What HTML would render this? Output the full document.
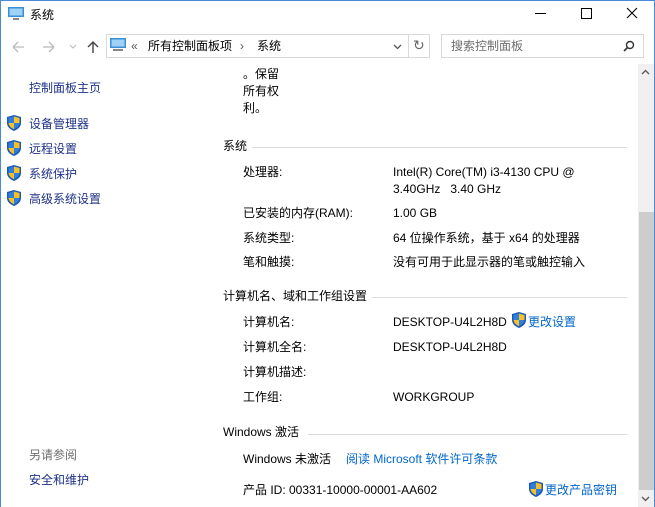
<!DOCTYPE html>
<html><head><meta charset="utf-8"><style>
*{margin:0;padding:0;box-sizing:border-box}
body{width:655px;height:507px;overflow:hidden;background:#fff;font-family:"Liberation Sans","Noto Sans CJK SC",sans-serif;font-size:12px;color:#000;position:relative}
.a{position:absolute;white-space:nowrap;line-height:14px}
.lk{color:#0066cc}
.nav{color:#1e3287}
.g{color:#6d6d6d}
.hl{position:absolute;height:1px;background:#dcdcdc}
.sh{position:absolute;width:14px;height:16px}
</style></head><body>
<div style="position:absolute;left:0;top:0;width:655px;height:507px;border:1px solid #4a8ad8;border-bottom:none"></div>
<!-- title -->
<svg class="a" style="left:8px;top:7px" width="16" height="14"><rect x="0" y="0" width="16" height="10" fill="#3a8fd8"/><rect x="1.5" y="1.5" width="13" height="7" fill="#9fd2f5"/><rect x="5" y="11" width="6" height="2" fill="#888"/></svg>
<div class="a" style="left:30px;top:8px">系统</div>
<svg class="a" style="left:530px;top:4px" width="110" height="20"><line x1="5" y1="9.5" x2="16" y2="9.5" stroke="#000"/><rect x="51.5" y="4.5" width="10" height="10" fill="none" stroke="#000"/><path d="M97 4 L107 14 M107 4 L97 14" stroke="#000" stroke-width="1.1"/></svg>
<!-- nav -->
<svg class="a" style="left:10px;top:40px" width="100" height="14"><path d="M3 7 H14 M3 7 L8 2 M3 7 L8 12" stroke="#bbb" fill="none" stroke-width="1.3"/><path d="M33 7 H44 M44 7 L39 2 M44 7 L39 12" stroke="#bbb" fill="none" stroke-width="1.3"/><path d="M60 5 L63 8 L66 5" stroke="#bbb" fill="none"/><path d="M83 13 V2 M78 7 L83 2 L88 7" stroke="#444" fill="none" stroke-width="1.4"/></svg>
<div style="position:absolute;left:106px;top:34px;width:324px;height:24px;border:1px solid #d9d9d9"></div>
<div style="position:absolute;left:408px;top:35px;width:1px;height:22px;background:#d9d9d9"></div>
<svg class="a" style="left:110px;top:38px" width="16" height="14"><rect x="0" y="0" width="16" height="10" fill="#3a8fd8"/><rect x="1.5" y="1.5" width="13" height="7" fill="#9fd2f5"/><rect x="3" y="11" width="10" height="2" fill="#888"/></svg>
<div class="a" style="left:131px;top:39px;color:#555">«</div>
<div class="a" style="left:148px;top:39px">所有控制面板项</div>
<div class="a" style="left:240px;top:39px;color:#555">›</div>
<div class="a" style="left:257px;top:39px">系统</div>
<svg class="a" style="left:393px;top:43px" width="10" height="8"><path d="M1 2 L4.5 5.5 L8 2" stroke="#555" fill="none" stroke-width="1.3"/></svg>
<div class="a" style="left:413px;top:38px;color:#666;font-size:14px">↻</div>
<div style="position:absolute;left:441px;top:34px;width:203px;height:24px;border:1px solid #d9d9d9"></div>
<div class="a g" style="left:451px;top:39px">搜索控制面板</div>
<svg class="a" style="left:623px;top:40px" width="12" height="12"><circle cx="7" cy="5" r="3.5" fill="none" stroke="#333" stroke-width="1.4"/><line x1="4.5" y1="7.5" x2="1" y2="11" stroke="#333" stroke-width="1.6"/></svg>
<!-- left pane -->
<div class="a nav" style="left:29px;top:81px">控制面板主页</div>
<svg width="0" height="0" style="position:absolute"><defs><g id="sh"><path d="M7 0 L14 2 L14 8 Q14 13 7 16 Q0 13 0 8 L0 2 Z" fill="#1c5bb5"/><path d="M7 1.5 L7 8 L1.5 8 L1.5 3 Z" fill="#2f7fdb"/><path d="M7 1.5 L12.5 3 L12.5 8 L7 8Z" fill="#f5c02a"/><path d="M1.5 8 L7 8 L7 14.3 Q2 12 1.5 8Z" fill="#f5c02a"/><path d="M7 8 L12.5 8 Q12 12 7 14.3Z" fill="#2f7fdb"/></g></defs></svg>
<svg class="sh" style="left:7px;top:115px"><use href="#sh"/></svg>
<svg class="sh" style="left:7px;top:140px"><use href="#sh"/></svg>
<svg class="sh" style="left:7px;top:165px"><use href="#sh"/></svg>
<svg class="sh" style="left:7px;top:190px"><use href="#sh"/></svg>
<div class="a nav" style="left:29px;top:117px">设备管理器</div>
<div class="a nav" style="left:29px;top:142px">远程设置</div>
<div class="a nav" style="left:29px;top:167px">系统保护</div>
<div class="a nav" style="left:29px;top:192px">高级系统设置</div>
<div class="a g" style="left:29px;top:448px">另请参阅</div>
<div class="a nav" style="left:29px;top:473px">安全和维护</div>
<!-- content -->
<div class="a" style="left:243px;top:67px">。保留</div>
<div class="a" style="left:243px;top:84px">所有权</div>
<div class="a" style="left:243px;top:101px">利。</div>
<div class="a" style="left:223px;top:139px">系统</div>
<div class="hl" style="left:252px;top:147px;width:375px"></div>
<div class="a" style="left:243px;top:165px">处理器:</div>
<div class="a" style="left:393px;top:165px">Intel(R) Core(TM) i3-4130 CPU @</div>
<div class="a" style="left:393px;top:182px">3.40GHz&nbsp;&nbsp; 3.40 GHz</div>
<div class="a" style="left:243px;top:206px">已安装的内存(RAM):</div>
<div class="a" style="left:393px;top:206px">1.00 GB</div>
<div class="a" style="left:243px;top:231px">系统类型:</div>
<div class="a" style="left:393px;top:231px">64 位操作系统，基于 x64 的处理器</div>
<div class="a" style="left:243px;top:255px">笔和触摸:</div>
<div class="a" style="left:393px;top:255px">没有可用于此显示器的笔或触控输入</div>
<div class="a" style="left:223px;top:289px">计算机名、域和工作组设置</div>
<div class="hl" style="left:372px;top:297px;width:255px"></div>
<div class="a" style="left:243px;top:315px">计算机名:</div>
<div class="a" style="left:393px;top:315px">DESKTOP-U4L2H8D</div>
<svg class="sh" style="left:512px;top:312px"><use href="#sh"/></svg>
<div class="a lk" style="left:528px;top:315px">更改设置</div>
<div class="a" style="left:243px;top:340px">计算机全名:</div>
<div class="a" style="left:393px;top:340px">DESKTOP-U4L2H8D</div>
<div class="a" style="left:243px;top:365px">计算机描述:</div>
<div class="a" style="left:243px;top:390px">工作组:</div>
<div class="a" style="left:393px;top:390px">WORKGROUP</div>
<div class="a" style="left:223px;top:425px">Windows 激活</div>
<div class="hl" style="left:308px;top:434px;width:319px"></div>
<div class="a" style="left:243px;top:452px">Windows 未激活</div>
<div class="a lk" style="left:346px;top:452px">阅读 Microsoft 软件许可条款</div>
<div class="a" style="left:243px;top:483px">产品 ID: 00331-10000-00001-AA602</div>
<svg class="sh" style="left:529px;top:481px"><use href="#sh"/></svg>
<div class="a lk" style="left:545px;top:483px">更改产品密钥</div>
<!-- scrollbar -->
<div style="position:absolute;left:638px;top:64px;width:16px;height:443px;background:#f0f0f0"></div>
<div style="position:absolute;left:639px;top:212px;width:15px;height:278px;background:#cdcdcd"></div>
<svg class="a" style="left:641px;top:68px" width="10" height="8"><path d="M1 6 L4.5 2.5 L8 6" stroke="#555" fill="none" stroke-width="1.3"/></svg>
<svg class="a" style="left:641px;top:495px" width="10" height="8"><path d="M1 2 L4.5 5.5 L8 2" stroke="#555" fill="none" stroke-width="1.3"/></svg>
</body></html>
